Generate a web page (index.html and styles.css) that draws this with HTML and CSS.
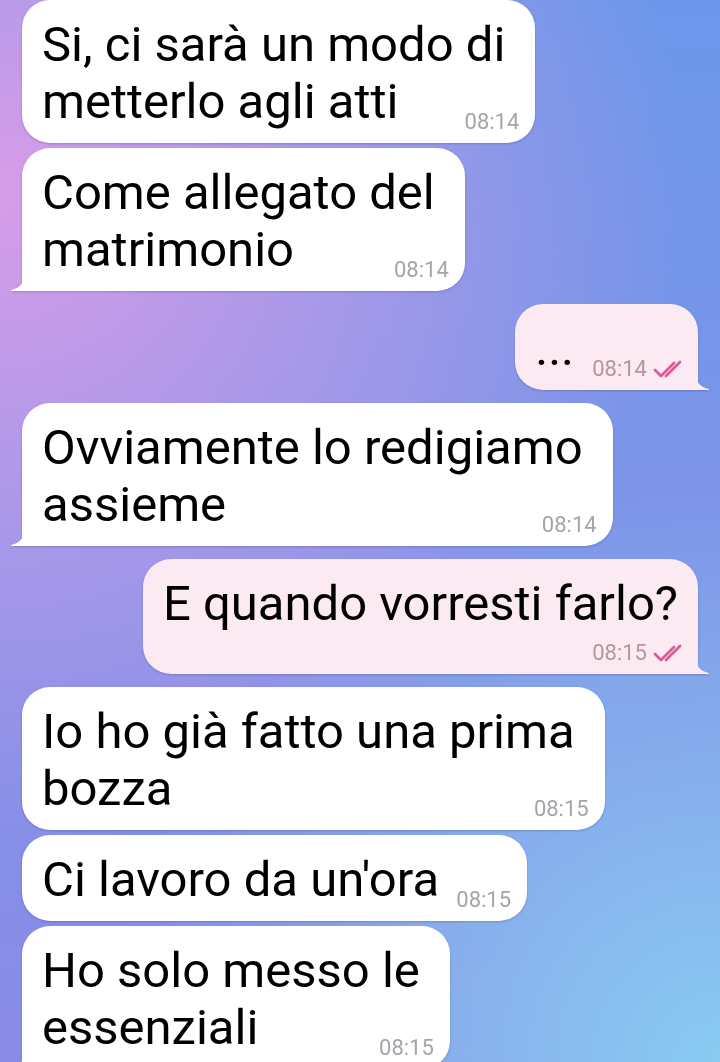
FILE: index.html
```html
<!DOCTYPE html>
<html>
<head>
  <title>Chat</title>
  <link rel="stylesheet" href="styles.css">
</head>
<body>
  <div class="chat">

    <div class="row in first-row">
      <div class="bubble">
        Si, ci sarà un modo di<br>metterlo agli atti<span class="spacer"></span>
        <span class="meta"><span class="time">08:14</span></span>
      </div>
    </div>
    <div class="row in same">
      <div class="bubble tail">
        Come allegato del<br>matrimonio<span class="spacer"></span>
        <span class="meta"><span class="time">08:14</span></span>
      </div>
    </div>

    <div class="row out">
      <div class="bubble tail">
        <span class="dots">...</span><span class="spacer"></span>
        <span class="meta">
          <span class="time">08:14</span>
          <svg class="checks" viewBox="0 0 34 18"><path d="M3 10 L9 16 L22 3 M14 16 L28 2"/></svg>
        </span>
      </div>
    </div>

    <div class="row in">
      <div class="bubble tail">
        Ovviamente lo redigiamo<br>assieme<span class="spacer"></span>
        <span class="meta"><span class="time">08:14</span></span>
      </div>
    </div>

    <div class="row out">
      <div class="bubble tail wrap">
        E quando vorresti farlo?<span class="spacer"></span>
        <span class="meta">
          <span class="time">08:15</span>
          <svg class="checks" viewBox="0 0 34 18"><path d="M3 10 L9 16 L22 3 M14 16 L28 2"/></svg>
        </span>
      </div>
    </div>

    <div class="row in">
      <div class="bubble">
        Io ho già fatto una prima<br>bozza<span class="spacer"></span>
        <span class="meta"><span class="time">08:15</span></span>
      </div>
    </div>
    <div class="row in same">
      <div class="bubble">
        Ci lavoro da un'ora<span class="spacer"></span>
        <span class="meta"><span class="time">08:15</span></span>
      </div>
    </div>
    <div class="row in same">
      <div class="bubble tail">
        Ho solo messo le<br>essenziali<span class="spacer"></span>
        <span class="meta"><span class="time">08:15</span></span>
      </div>
    </div>

  </div>
</body>
</html>
```

FILE: styles.css
```css
body {
  margin: 0;
  height: 1062px;
  overflow: hidden;
  font-family: Roboto, "Noto Sans", sans-serif;
  background:
    radial-gradient(ellipse 95% 62% at 0% 18%, rgba(216, 156, 232, 1), rgba(216, 156, 232, 0)),
    radial-gradient(ellipse 85% 55% at 100% 100%, rgba(136, 204, 242, 1), rgba(136, 204, 242, 0)),
    linear-gradient(to bottom, #6b97ea 0%, #8093e8 55%, #8a8be6 100%);
}

.chat {
  display: flex;
  flex-direction: column;
}

.row {
  display: flex;
  margin-top: 13px;
}

.row.first-row {
  margin-top: 0;
}

.row.same {
  margin-top: 5px;
}

.row.in {
  justify-content: flex-start;
  padding-left: 22px;
}

.row.out {
  justify-content: flex-end;
  padding-right: 22px;
}

.bubble {
  position: relative;
  background-color: #fff;
  color: #000;
  font-size: 49px;
  line-height: 57px;
  padding: 16px 30px 13px 20px;
  border-radius: 28px;
  filter: drop-shadow(0 1px 1px rgba(40, 40, 90, 0.25));
}

.out .bubble {
  background-color: #fbeaf2;
  padding-right: 20px;
}

/* bubble with a tail keeps a sharp corner on its side */
.in .bubble.tail {
  border-bottom-left-radius: 0;
}

.out .bubble.tail {
  border-bottom-right-radius: 0;
}

.in .bubble.tail::before,
.out .bubble.tail::before {
  content: "";
  position: absolute;
  bottom: 0;
  width: 14px;
  height: 16px;
  background-color: inherit;
}

.in .bubble.tail::before {
  left: -12px;
  clip-path: path("M14 0 C14 8 10 13 1 15 Q0 16 2 16 L14 16 Z");
}

.out .bubble.tail::before {
  right: -12px;
  clip-path: path("M0 0 C0 8 4 13 13 15 Q14 16 12 16 L0 16 Z");
}

.spacer {
  display: inline-block;
  width: 58px;
  height: 1px;
}

.out .spacer {
  width: 104px;
}

.bubble.wrap .spacer {
  display: block;
  height: 29px;
}

.meta {
  position: absolute;
  right: 16px;
  bottom: 10px;
  display: flex;
  align-items: center;
  gap: 5px;
  font-size: 22px;
  line-height: 22px;
}

.out .meta {
  right: 12px;
}

.time {
  color: #a4a4aa;
}

.out .time {
  color: #b5959f;
}

.checks {
  width: 34px;
  height: 18px;
  fill: none;
  stroke: #dd5a9a;
  stroke-width: 2.8;
  stroke-linecap: round;
  stroke-linejoin: round;
}
```
